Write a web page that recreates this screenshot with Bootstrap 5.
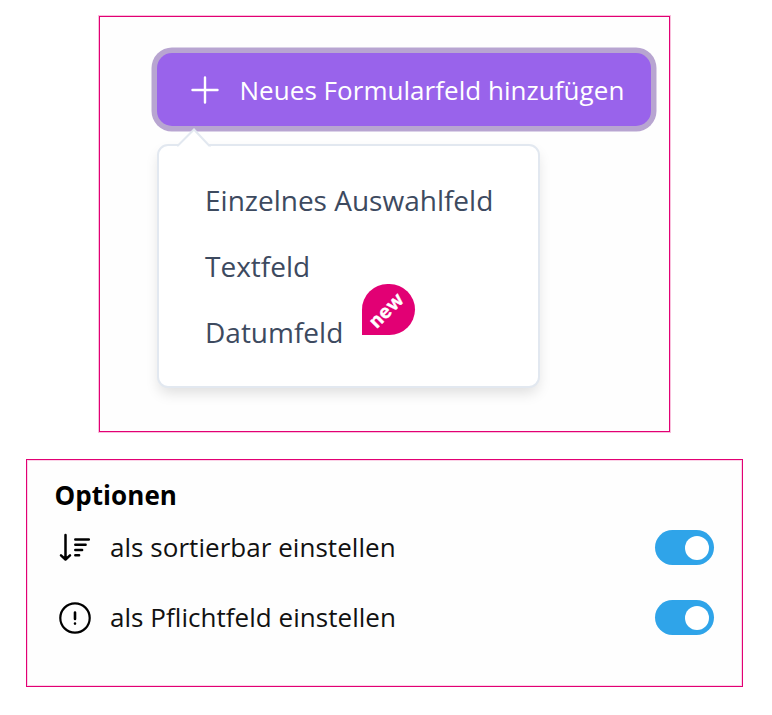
<!DOCTYPE html>
<html lang="de">
<head>
<meta charset="utf-8">
<meta name="viewport" content="width=device-width, initial-scale=1">
<title>Formularfelder</title>
<link href="https://cdn.jsdelivr.net/npm/bootstrap@5.3.0/dist/css/bootstrap.min.css" rel="stylesheet">
<style>
body{font-family:"Open Sans","Noto Sans",sans-serif;background:#fff;color:#111;height:715px;overflow:hidden}
.panel{border:1px solid #e20074;background:#fefefe}
.panel-add{width:571px;height:416px;margin:16px 0 0 99px;padding:36px 0 0 57px;box-shadow:0 0 0 1px #f9bfdc}
.panel-options{width:717px;height:228px;margin:27px 0 0 26px;padding:19px 28px 0;box-shadow:inset 0 0 0 1px #fbd3e7}
.btn-add,.btn-add:hover{width:494px;height:73px;background:#9963eb;color:#fff;border:0;border-radius:15px;box-shadow:0 0 0 5.5px #b8a5d1;padding:0 0 0 34px;font-size:26px;line-height:36px;letter-spacing:.04px}
.btn-add svg{margin-right:20.5px}
.field-menu{position:relative;width:383px;height:244px;margin:18px 0 0;border:2px solid #e2e8f0;border-radius:11px;background:#fff;padding:21px 0 0 46px;box-shadow:0 7px 14px -2px rgba(0,0,0,.13)}
.menu-tip{position:absolute;left:16px;top:-19px}
.field-item{height:66px;color:#3d4a5f;font-size:28px;line-height:66px;white-space:nowrap}
.new-badge{position:absolute;left:203px;top:138px;width:53px;height:51px;border-radius:26px 26px 26px 0;background:#e20074;color:#fff;font:900 20px/1 Lato,sans-serif;letter-spacing:.9px;-webkit-text-stroke:.4px #fff}
.new-badge span{transform:translate(-3px,-1px) rotate(-45deg)}
.opt-title{font-size:26px;line-height:32px;font-weight:700;color:#000;margin:0 0 0 -.5px;letter-spacing:.06px}
.opt-row{height:70px;font-size:26px;letter-spacing:.04px}
.opt-title + .opt-row{margin-top:1px}
.opt-row svg{margin:1px 19px 0 4px}
.opt-switch.form-check-input{width:59px;height:35px;margin:1px 0 0;border:0;border-radius:18px;background-color:#2fa4e9;background-image:none;padding:6px}
.opt-switch::after{content:"";display:block;width:24px;height:24px;border-radius:50%;background:#fff;margin-left:24px}
</style>
<script src="https://cdn.jsdelivr.net/npm/bootstrap@5.3.0/dist/js/bootstrap.bundle.min.js"></script>
</head>
<body class="d-flex flex-column align-items-start">
<section class="panel panel-add">
  <button type="button" class="btn btn-add d-flex align-items-center">
    <svg width="28" height="28" viewBox="0 0 28 28" fill="none" stroke="#fff" stroke-width="2.4" stroke-linecap="round"><path d="M14 1.500v25M1.500 14h25"/></svg>
    <span class="btn-label">Neues Formularfeld hinzufügen</span>
  </button>
  <div class="field-menu">
    <svg class="menu-tip" width="40" height="20" viewBox="0 0 40 20" fill="#fff"><path d="M2 20 19 2.500 36 20Z"/><path d="M2 18.500h1L19 2.500l15 16h2" fill="none" stroke="#e2e8f0" stroke-width="2"/></svg>
    <div class="field-item"><span class="item-label">Einzelnes Auswahlfeld</span></div>
    <div class="field-item"><span class="item-label">Textfeld</span></div>
    <div class="field-item"><span class="item-label">Datumfeld</span></div>
    <div class="new-badge d-flex align-items-center justify-content-center"><span>new</span></div>
  </div>
</section>
<section class="panel panel-options">
  <h2 class="opt-title">Optionen</h2>
  <div class="opt-row d-flex align-items-center">
    <svg width="32" height="32" viewBox="0 0 32 32" fill="none" stroke="#000" stroke-width="2.500" stroke-linecap="round" stroke-linejoin="round"><path d="M6.500 3v24M2 23.300l4.500 4.200 4.500-4.200M16.300 7.500h13.500M16.300 12.800h10.300M16.300 18h6.800M16.300 23.300h3.800"/></svg>
    <span class="opt-label">als sortierbar einstellen</span>
    <input class="form-check-input opt-switch ms-auto" type="checkbox" checked aria-label="als sortierbar einstellen">
  </div>
  <div class="opt-row d-flex align-items-center">
    <svg width="32" height="32" viewBox="0 0 32 32" fill="none" stroke="#000" stroke-width="2.200" stroke-linecap="round"><circle cx="16" cy="16" r="14.700"/><path d="M16 10.500v6.500M16 21.500v.1" stroke-width="2.600"/></svg>
    <span class="opt-label">als Pflichtfeld einstellen</span>
    <input class="form-check-input opt-switch ms-auto" type="checkbox" checked aria-label="als Pflichtfeld einstellen">
  </div>
</section>
</body>
</html>
